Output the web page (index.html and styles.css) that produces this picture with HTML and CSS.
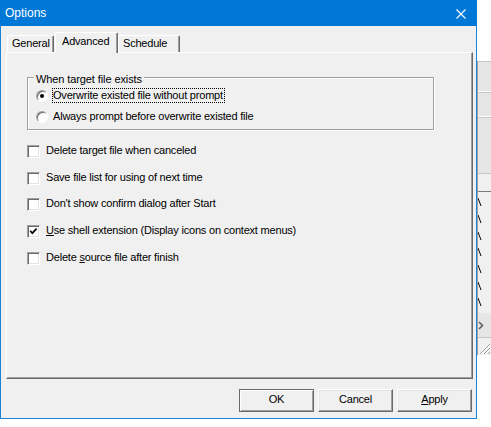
FILE: index.html
```html
<!DOCTYPE html>
<html>
<head>
  <meta charset="UTF-8">
  <title>Options</title>
  <link rel="stylesheet" href="styles.css">
</head>
<body>
  <div class="desktop">
    <div class="dialog">
      <div class="titlebar">
        <span class="title">Options</span>
        <svg class="close" width="10" height="10" viewBox="0 0 10 10">
          <path d="M0.5 0.5 L9.5 9.5 M9.5 0.5 L0.5 9.5" stroke="#fff" stroke-width="1.1" fill="none"/>
        </svg>
      </div>

      <div class="tabs">
        <div class="tab tab-general">General</div>
        <div class="tab tab-advanced active">Advanced</div>
        <div class="tab tab-schedule">Schedule</div>
      </div>

      <div class="panel">
        <div class="group">
          <div class="legend">When target file exists</div>
          <div class="radio-row">
            <span class="radio checked"></span>
            <span class="label focus">Overwrite existed file without prompt</span>
          </div>
          <div class="radio-row">
            <span class="radio"></span>
            <span class="label">Always prompt before overwrite existed file</span>
          </div>
        </div>

        <div class="checks">
          <div class="check-row">
            <span class="box"></span>
            <span class="label">Delete target file when canceled</span>
          </div>
          <div class="check-row">
            <span class="box"></span>
            <span class="label">Save file list for using of next time</span>
          </div>
          <div class="check-row">
            <span class="box"></span>
            <span class="label">Don't show confirm dialog after Start</span>
          </div>
          <div class="check-row">
            <span class="box">
              <svg width="11" height="11" viewBox="0 0 11 11">
                <path d="M2.2 4.8 L4.3 7.2 L8.6 2.6" stroke="#000" stroke-width="1.7" fill="none"/>
              </svg>
            </span>
            <span class="label"><u>U</u>se shell extension (Display icons on context menus)</span>
          </div>
          <div class="check-row">
            <span class="box"></span>
            <span class="label">Delete <u>s</u>ource file after finish</span>
          </div>
        </div>
      </div>

      <div class="buttons">
        <button class="btn default">OK</button>
        <button class="btn">Cancel</button>
        <button class="btn"><u>A</u>pply</button>
      </div>
    </div>

    <div class="behind">
      <svg width="14" height="294" viewBox="0 0 14 294">
        <rect x="0" y="0" width="14" height="294" fill="#f0f0f0"/>
        <rect x="0" y="0" width="14" height="112" fill="#e6e6e6"/>
        <path d="M0 0.5 H14 M0 31.5 H14 M0 56.5 H14 M0 112.5 H14" stroke="#c6c6c6"/>
        <path d="M0 30.5 H14 M0 55.5 H14" stroke="#fff"/>
        <path d="M0 130.5 H14" stroke="#7a7a7a"/>
        <path d="M1 137 L4 145 M1 154 L4 162 M1 171 L4 179 M1 187 L4 195 M1 204 L4 212 M1 221 L4 229 M1 237 L4 245" stroke="#000" stroke-width="1"/>
        <rect x="0" y="252" width="14" height="24" fill="#e6e6e6"/>
        <path d="M2 261 L5.5 264.5 L2 268" stroke="#606060" stroke-width="1.6" fill="none"/>
        <path d="M0 276.5 H14" stroke="#c6c6c6"/>
        <path d="M3 293 L13 283 M7 293 L13 287 M11 293 L13 291" stroke="#a0a0a0"/>
        <path d="M4 293 L13 284 M8 293 L13 288" stroke="#fff"/>
        <path d="M0.5 0 V294" stroke="#a0a0a0"/>
      </svg>
    </div>
  </div>
</body>
</html>
```

FILE: styles.css
```css
html, body {
  margin: 0;
  padding: 0;
}
body {
  width: 491px;
  height: 427px;
  overflow: hidden;
  background: #fff;
  font-family: "Liberation Sans", Arial, sans-serif;
  font-size: 11px;
  line-height: 13px;
  letter-spacing: -0.2px;
  color: #000;
}
.desktop {
  display: flex;
  align-items: flex-start;
}
.dialog {
  box-sizing: border-box;
  width: 477px;
  height: 419px;
  background: #f0f0f0;
  border: 1px solid #1883d7;
  border-top: none;
  display: flex;
  flex-direction: column;
}
.titlebar {
  margin: 0 -1px;
  height: 26px;
  background: #0078d7;
  display: flex;
  align-items: center;
  justify-content: space-between;
  padding: 0 11px 0 5px;
}
.title {
  color: #fff;
  font-size: 12px;
  letter-spacing: 0;
  line-height: 26px;
}
.close {
  display: block;
  margin-top: 1px;
}

/* tab strip */
.tabs {
  display: flex;
  align-items: flex-end;
  height: 20px;
  margin: 6px 0 0 5px;
  padding-left: 1px;
}
.tab {
  box-sizing: border-box;
  height: 17px;
  padding: 1px 0 0 5px;
  border-top: 1px solid #fff;
  border-left: 1px solid #fff;
  border-right: 1px solid #696969;
  border-top-right-radius: 2px;
  box-shadow: inset -1px 0 0 #a0a0a0;
  background: #f0f0f0;
  white-space: nowrap;
}
.tab-general {
  width: 47px;
  margin-right: 1px;
  padding-left: 4px;
}
.tab-advanced {
  width: 63px;
  padding-left: 6px;
}
.tab-schedule {
  width: 62px;
  padding-left: 4px;
}
.tab.active {
  height: 21px;
  margin-bottom: -1px;
  padding-top: 2px;
  position: relative;
  z-index: 1;
}

/* page */
.panel {
  box-sizing: border-box;
  width: 467px;
  height: 327px;
  margin-left: 5px;
  padding: 24px 0 0 20px;
  border-top: 1px solid #fff;
  border-left: 1px solid #fff;
  border-right: 1px solid #696969;
  border-bottom: 1px solid #696969;
  box-shadow: inset -1px -1px 0 #a0a0a0;
}
.group {
  box-sizing: border-box;
  width: 407px;
  border: 1px solid #a0a0a0;
  box-shadow: 1px 1px 0 #fff, inset 1px 1px 0 #fff;
  padding-bottom: 5px;
}
.legend {
  width: fit-content;
  margin: -5px 0 0 6px;
  padding: 0 2px 0 2px;
  background: #f0f0f0;
  letter-spacing: -0.1px;
}
.radio-row {
  display: flex;
  align-items: center;
  height: 15px;
  margin: 2px 0 0 8px;
}
.radio-row + .radio-row {
  margin-top: 6px;
}
.radio {
  box-sizing: border-box;
  width: 12px;
  height: 12px;
  margin-right: 4px;
  border-radius: 50%;
  background: #fff;
  border: 1px solid;
  border-color: #a0a0a0 #fff #fff #a0a0a0;
  box-shadow: inset 1px 1px 0 #696969;
  display: flex;
  align-items: center;
  justify-content: center;
}
.radio.checked::after {
  content: "";
  width: 4px;
  height: 4px;
  border-radius: 50%;
  background: #000;
}
.radio-row .label {
  border: 1px dotted transparent;
  padding-right: 1px;
}
.radio-row .label.focus {
  border-color: #000;
}

.checks {
  display: flex;
  flex-direction: column;
  gap: 13.67px;
  margin-top: 14px;
}
.check-row {
  display: flex;
  align-items: flex-start;
  height: 13px;
}
.box {
  box-sizing: border-box;
  width: 13px;
  height: 13px;
  margin-top: 1px;
  background: #fff;
  border: 1px solid;
  border-color: #a0a0a0 #fff #fff #a0a0a0;
  box-shadow: inset 1px 1px 0 #696969, inset -1px -1px 0 #e3e3e3;
}
.box svg {
  display: block;
}
.check-row .label {
  margin-left: 6px;
}

/* buttons */
.buttons {
  display: flex;
  justify-content: flex-end;
  gap: 4px;
  margin-top: 10px;
  padding-right: 4px;
}
.btn {
  box-sizing: border-box;
  width: 75px;
  height: 23px;
  padding: 0 0 2px;
  font: inherit;
  letter-spacing: inherit;
  line-height: 13px;
  color: #000;
  background: #f0f0f0;
  border: 1px solid;
  border-color: #fff #696969 #696969 #fff;
  box-shadow: inset -1px -1px 0 #a0a0a0, inset 1px 1px 0 #e3e3e3;
}
.btn.default {
  border-color: #696969;
  box-shadow: inset 1px 1px 0 #fff, inset -1px -1px 0 #a0a0a0;
}

.behind {
  margin-top: 61px;
  width: 14px;
  height: 294px;
}
.behind svg {
  display: block;
}
```
